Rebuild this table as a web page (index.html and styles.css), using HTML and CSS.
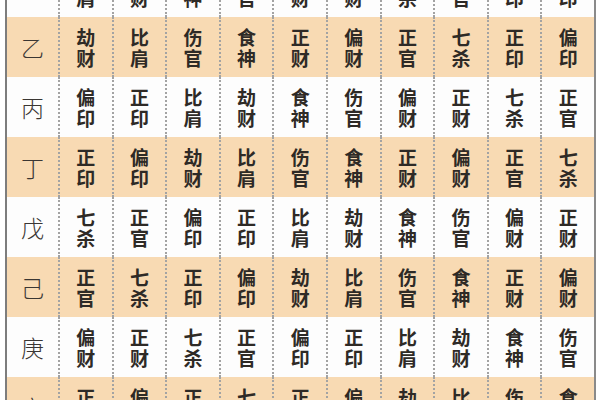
FILE: index.html
```html
<!DOCTYPE html>
<html lang="zh">
<head>
<meta charset="utf-8">
<link rel="stylesheet" href="styles.css">
</head>
<body>
<div class="table">
  <div class="row">
    <div class="stem">甲</div>
    <div class="cell">比<br>肩</div><div class="cell">劫<br>财</div><div class="cell">食<br>神</div><div class="cell">伤<br>官</div><div class="cell">偏<br>财</div><div class="cell">正<br>财</div><div class="cell">七<br>杀</div><div class="cell">正<br>官</div><div class="cell">偏<br>印</div><div class="cell">正<br>印</div>
  </div>
  <div class="row shade">
    <div class="stem">乙</div>
    <div class="cell">劫<br>财</div><div class="cell">比<br>肩</div><div class="cell">伤<br>官</div><div class="cell">食<br>神</div><div class="cell">正<br>财</div><div class="cell">偏<br>财</div><div class="cell">正<br>官</div><div class="cell">七<br>杀</div><div class="cell">正<br>印</div><div class="cell">偏<br>印</div>
  </div>
  <div class="row">
    <div class="stem">丙</div>
    <div class="cell">偏<br>印</div><div class="cell">正<br>印</div><div class="cell">比<br>肩</div><div class="cell">劫<br>财</div><div class="cell">食<br>神</div><div class="cell">伤<br>官</div><div class="cell">偏<br>财</div><div class="cell">正<br>财</div><div class="cell">七<br>杀</div><div class="cell">正<br>官</div>
  </div>
  <div class="row shade">
    <div class="stem">丁</div>
    <div class="cell">正<br>印</div><div class="cell">偏<br>印</div><div class="cell">劫<br>财</div><div class="cell">比<br>肩</div><div class="cell">伤<br>官</div><div class="cell">食<br>神</div><div class="cell">正<br>财</div><div class="cell">偏<br>财</div><div class="cell">正<br>官</div><div class="cell">七<br>杀</div>
  </div>
  <div class="row">
    <div class="stem">戊</div>
    <div class="cell">七<br>杀</div><div class="cell">正<br>官</div><div class="cell">偏<br>印</div><div class="cell">正<br>印</div><div class="cell">比<br>肩</div><div class="cell">劫<br>财</div><div class="cell">食<br>神</div><div class="cell">伤<br>官</div><div class="cell">偏<br>财</div><div class="cell">正<br>财</div>
  </div>
  <div class="row shade">
    <div class="stem">己</div>
    <div class="cell">正<br>官</div><div class="cell">七<br>杀</div><div class="cell">正<br>印</div><div class="cell">偏<br>印</div><div class="cell">劫<br>财</div><div class="cell">比<br>肩</div><div class="cell">伤<br>官</div><div class="cell">食<br>神</div><div class="cell">正<br>财</div><div class="cell">偏<br>财</div>
  </div>
  <div class="row">
    <div class="stem">庚</div>
    <div class="cell">偏<br>财</div><div class="cell">正<br>财</div><div class="cell">七<br>杀</div><div class="cell">正<br>官</div><div class="cell">偏<br>印</div><div class="cell">正<br>印</div><div class="cell">比<br>肩</div><div class="cell">劫<br>财</div><div class="cell">食<br>神</div><div class="cell">伤<br>官</div>
  </div>
  <div class="row shade">
    <div class="stem">辛</div>
    <div class="cell">正<br>财</div><div class="cell">偏<br>财</div><div class="cell">正<br>官</div><div class="cell">七<br>杀</div><div class="cell">正<br>印</div><div class="cell">偏<br>印</div><div class="cell">劫<br>财</div><div class="cell">比<br>肩</div><div class="cell">伤<br>官</div><div class="cell">食<br>神</div>
  </div>
</div>
</body>
</html>
```
FILE: styles.css
```css
html, body {
  margin: 0;
  padding: 0;
  background: #ffffff;
  overflow: hidden;
  width: 600px;
  height: 400px;
}

.table {
  margin: -43px 0 0 5px;
  width: 587px;
  border-left: 2px solid #7d7d7d;
  border-right: 2px solid #8a8a8a;
  font-family: "Noto Sans CJK SC", "Noto Sans", sans-serif;
  color: #2e2a26;
}

.row {
  display: grid;
  grid-template-columns: 51px repeat(10, 1fr);
  height: 60px;
  background: #fdfdfd;
}

.row.shade {
  background: #f8dab3;
}

.stem {
  display: flex;
  align-items: center;
  justify-content: center;
  font-size: 23px;
  font-weight: 300;
  color: #3a3633;
}

.cell {
  display: flex;
  align-items: center;
  justify-content: center;
  text-align: center;
  border-left: 2px dotted #a3a3a3;
  font-size: 19px;
  line-height: 21px;
  font-weight: 600;
}
```
